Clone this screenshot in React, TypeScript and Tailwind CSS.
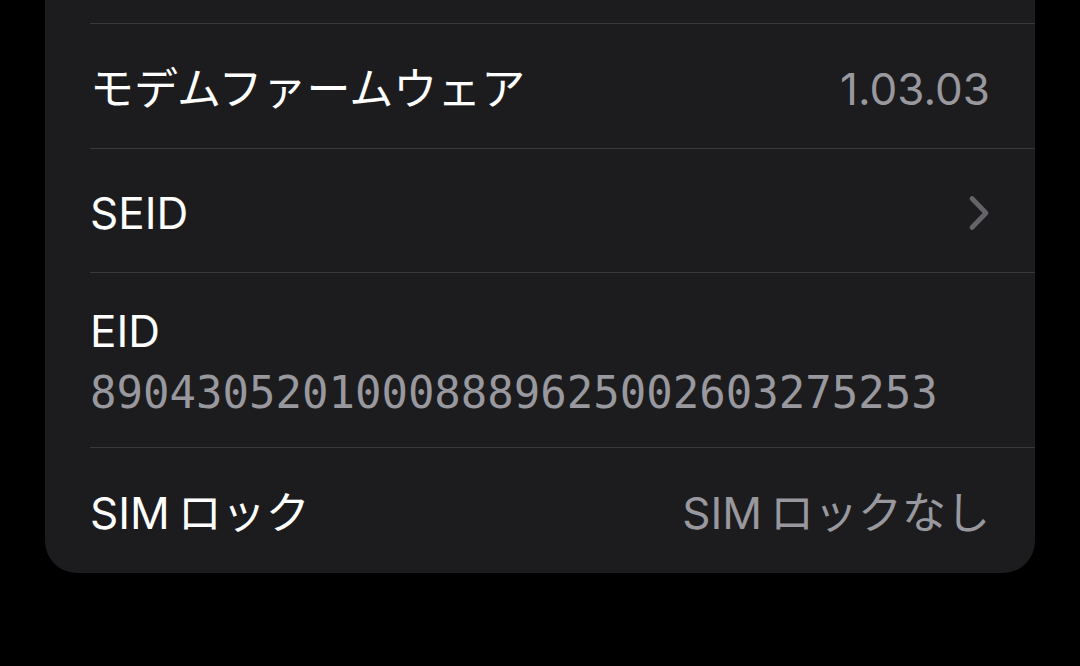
const Chevron = () => (
  <svg width="22" height="36" viewBox="0 0 22 36" fill="none">
    <path d="M4 3.5 L18 18 L4 32.5" stroke="#636368" strokeWidth="4.8" strokeLinecap="round" strokeLinejoin="round" />
  </svg>
)

const App = () => {
  return (
    <div className="w-[1080px] h-[666px] bg-black overflow-hidden font-['Inter','Noto_Sans_CJK_JP',sans-serif]">
      <div className="ml-[45px] w-[990px] bg-[#1c1c1e] rounded-b-[32px] pl-[45px]">

        {/* row above, cut off */}
        <div className="h-[24px] border-b border-[#38383a]" />

        <div className="h-[125px] flex items-center justify-between pr-[45px] pt-[6px] border-b border-[#38383a]">
          <span className="text-[44px] text-white">モデムファームウェア</span>
          <span className="text-[44px] text-[#98989e]">1.03.03</span>
        </div>

        <div className="h-[124px] flex items-center justify-between pr-[45px] pt-[4px] border-b border-[#38383a]">
          <span className="text-[44px] text-white">SEID</span>
          <Chevron />
        </div>

        <div className="h-[175px] flex flex-col justify-center gap-[10px] pt-[4px] border-b border-[#38383a]">
          <span className="text-[44px] leading-[52px] text-white">EID</span>
          <span className="text-[44px] leading-[52px] text-[#98989e] font-['DejaVu_Sans_Mono',monospace]">
            89043052010008889625002603275253
          </span>
        </div>

        <div className="h-[125px] flex items-center justify-between pr-[45px] pt-[4px]">
          <span className="text-[44px] text-white">SIM{'\u2009'}ロック</span>
          <span className="text-[44px] text-[#98989e]">SIM{'\u2009'}ロックなし</span>
        </div>

      </div>
    </div>
  )
}

export default App
